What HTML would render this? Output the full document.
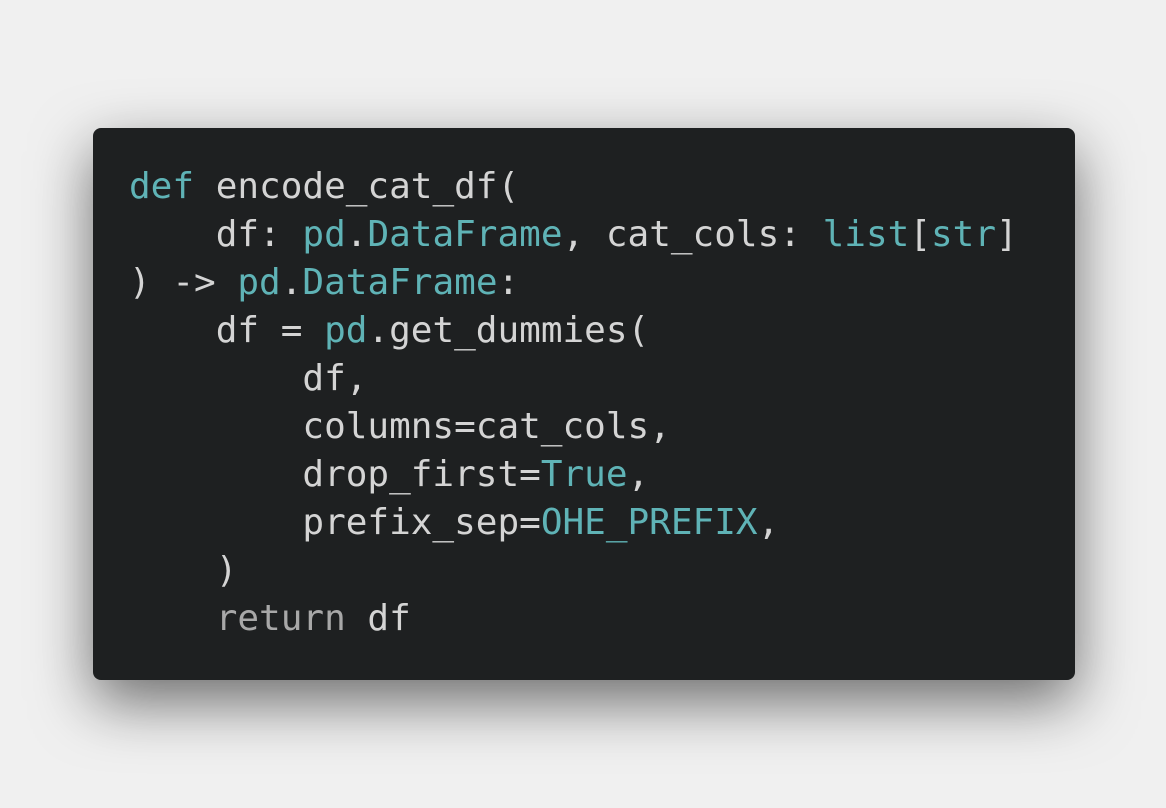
<!DOCTYPE html>
<html><head><style>
html,body{margin:0;padding:0;width:1166px;height:808px;background:#f0f0f0;overflow:hidden}
.box{position:absolute;left:93px;top:128px;width:982px;height:552px;background:#1e2021;border-radius:8px;box-shadow:0 22px 60px rgba(0,0,0,0.55)}
pre{margin:0;position:absolute;left:129px;top:163px;font-family:"DejaVu Sans Mono","Liberation Mono",monospace;font-size:36px;line-height:48px;color:#d4d4d4}
.k{color:#5fb3b6}
.g{color:#a8a8a8}
</style></head><body>
<div class="box"></div>
<pre><span class="k">def</span> encode_cat_df(
    df: <span class="k">pd</span>.<span class="k">DataFrame</span>, cat_cols: <span class="k">list</span>[<span class="k">str</span>]
) -&gt; <span class="k">pd</span>.<span class="k">DataFrame</span>:
    df = <span class="k">pd</span>.get_dummies(
        df,
        columns=cat_cols,
        drop_first=<span class="k">True</span>,
        prefix_sep=<span class="k">OHE_PREFIX</span>,
    )
    <span class="g">return</span> df</pre>
</body></html>
